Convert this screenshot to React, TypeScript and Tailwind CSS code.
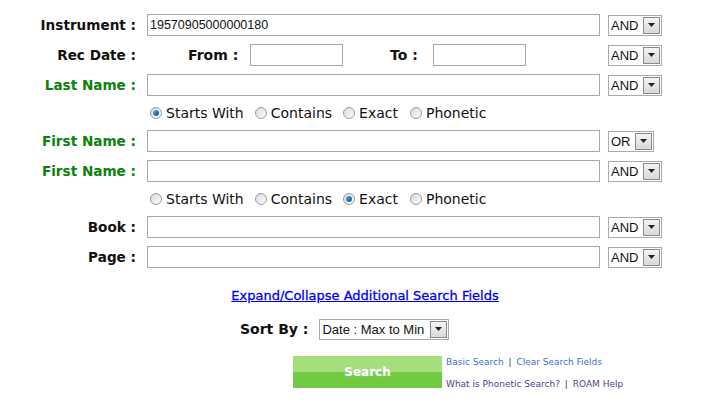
import React from "react";

const V = { fontFamily: '"DejaVu Sans", Verdana, sans-serif' } as React.CSSProperties;
const A = { fontFamily: '"Liberation Sans", Arial, sans-serif' } as React.CSSProperties;

function Sel({ value, w }: { value: string; w: number }) {
  return (
    <div
      className="flex items-center h-[21px] border border-[#a5acb2] bg-white pl-[2px] pr-[1px] box-border"
      style={{ width: w }}
    >
      <span className="flex-1 text-[13px] text-[#111] leading-none" style={A}>{value}</span>
      <span className="w-[17px] h-[17px] border border-[#8a8a8a] bg-gradient-to-b from-[#f4f4f4] to-[#d8d8d8] flex items-center justify-center box-border">
        <svg width="7" height="4" viewBox="0 0 7 4"><path d="M0 0h7L3.5 4z" fill="#222" /></svg>
      </span>
    </div>
  );
}

function Inp({ w, value }: { w: number; value?: string }) {
  return (
    <div
      className="h-[22px] border border-[#a9a9a9] bg-white flex items-center pl-[2px] box-border text-[12.5px] text-[#111]"
      style={{ ...A, width: w }}
    >
      {value}
    </div>
  );
}

function Radio({ checked }: { checked?: boolean }) {
  return (
    <span className="inline-flex w-[12px] h-[12px] rounded-full border border-[#9a9a9a] bg-gradient-to-br from-[#d8d8d8] to-[#ffffff] items-center justify-center box-border mr-[4px]">
      {checked && <span className="w-[6px] h-[6px] rounded-full bg-gradient-to-br from-[#5ab0e8] to-[#0a4a8a]" />}
    </span>
  );
}

function Label({ text, green }: { text: string; green?: boolean }) {
  return (
    <div
      className={`w-[137px] text-right font-bold text-[13.6px] pr-[1px] whitespace-nowrap ${green ? "text-[#0a830a]" : "text-[#111]"}`}
      style={V}
    >
      {text}
    </div>
  );
}

function Row({ label, green, sel, children }: { label: string; green?: boolean; sel: string; children?: React.ReactNode }) {
  return (
    <div className="flex items-center h-[30px]">
      <Label text={label} green={green} />
      <div className="ml-[10px] w-[453px] flex items-center">{children ?? <Inp w={453} />}</div>
      <div className="ml-[8px]">
        <Sel value={sel} w={sel === "OR" ? 46 : 54} />
      </div>
    </div>
  );
}

function RadioRow({ checked }: { checked: number }) {
  const opts = [
    ["Starts With", 0],
    ["Contains", 11],
    ["Exact", 11],
    ["Phonetic", 12],
  ] as const;
  return (
    <div className="flex items-center h-[26px] pl-[150px] text-[14px] text-[#111]" style={V}>
      {opts.map(([t, m], i) => (
        <span key={t} className="flex items-center" style={{ marginLeft: m }}>
          <Radio checked={checked === i} />
          {t}
        </span>
      ))}
    </div>
  );
}

export default function App() {
  return (
    <div className="w-[713px] h-[409px] bg-white pt-[10px] relative overflow-hidden">
      <Row label="Instrument :" sel="AND">
        <Inp w={453} value="19570905000000180" />
      </Row>
      <Row label="Rec Date :" sel="AND">
        <div className="flex items-center">
          <span className="ml-[41px] w-[49px] whitespace-nowrap font-bold text-[14px] text-[#111]" style={V}>From :</span>
          <div className="ml-[13px]"><Inp w={93} /></div>
          <span className="ml-[47px] w-[30px] whitespace-nowrap font-bold text-[14px] text-[#111]" style={V}>To :</span>
          <div className="ml-[13px]"><Inp w={93} /></div>
        </div>
      </Row>
      <Row label="Last Name :" green sel="AND" />
      <RadioRow checked={0} />
      <Row label="First Name :" green sel="OR" />
      <Row label="First Name :" green sel="AND" />
      <RadioRow checked={2} />
      <Row label="Book :" sel="AND" />
      <Row label="Page :" sel="AND" />

      <div className="flex justify-center pl-[17px] mt-[15px] h-[18px] items-center">
        <a href="#" className="text-[13px] font-normal underline text-[#0000ee] [-webkit-text-stroke:0.3px_#0000ee]" style={V}>
          Expand/Collapse Additional Search Fields
        </a>
      </div>

      <div className="flex items-center mt-[9px] h-[30px] pl-[240px]">
        <span className="font-bold text-[14px] text-[#111]" style={V}>Sort By :</span>
        <div className="ml-[11px]">
          <Sel value="Date : Max to Min" w={130} />
        </div>
      </div>

      <div className="flex mt-[12px] pl-[293px]">
        <div className="w-[149px] h-[32px] flex flex-col relative">
          <div className="h-[16px] bg-[#a5de7a]" />
          <div className="h-[16px] bg-[#72c942]" />
          <span
            className="absolute inset-0 flex items-center justify-center text-white font-bold text-[12px] [text-shadow:0_0_2px_#a8d8b0]"
            style={V}
          >
            Search
          </span>
        </div>
        <div className="ml-[4px] flex flex-col text-[9px] leading-none" style={V}>
          <div className="mt-[2px] text-[#3a6fd0]">
            Basic Search <span className="text-[#333] mx-[2px]">|</span> Clear Search Fields
          </div>
          <div className="mt-[13px] text-[#5a3a8a]">
            What is Phonetic Search? <span className="text-[#333] mx-[2px]">|</span> ROAM Help
          </div>
        </div>
      </div>
    </div>
  );
}
